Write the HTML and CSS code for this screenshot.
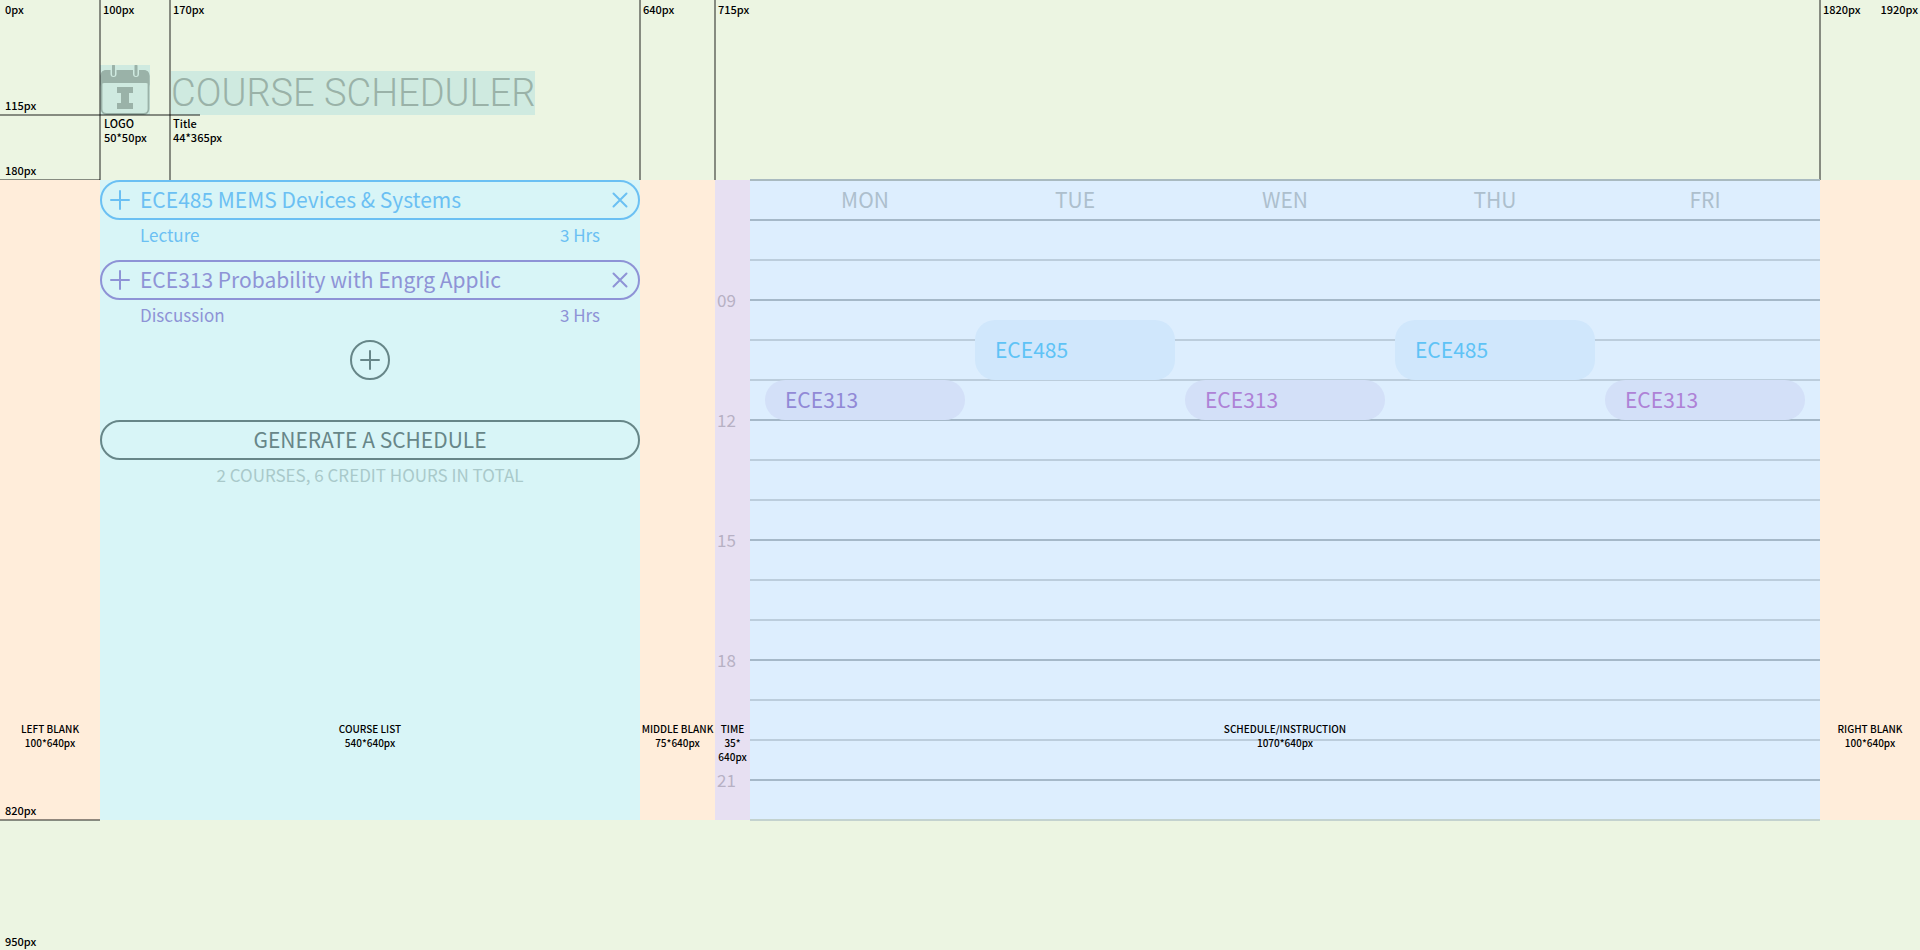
FILE: index.html
```
<!DOCTYPE html>
<html lang="en">
<head>
<meta charset="utf-8">
<title>Course Scheduler</title>
<link rel="stylesheet" href="styles.css">
</head>
<body>
<svg class="sprite" aria-hidden="true">
  <symbol id="plus" viewBox="0 0 20 20"><path d="M10 1v18M1 10h18"/></symbol>
  <symbol id="cross" viewBox="0 0 20 20"><path d="M3.500 3.500l13 13M16.500 3.500l-13 13"/></symbol>
</svg>
<header class="header">
  <div class="brand">
    <svg class="logo" viewBox="0 0 50 50" role="img" aria-label="Course Scheduler logo">
      <rect x="1.500" y="6" width="47" height="43" rx="5" fill="none" stroke="#9ab2a8" stroke-width="1.800"/>
      <path fill="#9ab2a8" d="M.5 22V11q0-6 6-6h37q6 0 6 6v11q0-4-4-4h-41q-4 0-4 4z"/>
      <path fill="#9ab2a8" d="M17 22h16v6h-4v10h4v6H17v-6h4V28h-4z"/>
      <path d="M13.500 0v9M36 0v9" stroke="#cfeae0" stroke-width="6" stroke-linecap="round"/>
      <path d="M13.500 1v8.500M36 1v8.500" stroke="#9ab2a8" stroke-width="3" stroke-linecap="round"/>
    </svg>
    <h1 class="title">COURSE SCHEDULER</h1>
  </div>
  <div class="mark mark-0">0px</div>
  <div class="mark guide guide-100">100px</div>
  <div class="mark guide guide-170">170px</div>
  <div class="mark guide guide-640">640px</div>
  <div class="mark guide guide-715">715px</div>
  <div class="mark guide guide-1820">1820px</div>
  <div class="mark mark-1920">1920px</div>
  <div class="mark level level-115">115px</div>
  <div class="mark level level-180">180px</div>
  <div class="mark note-logo">LOGO<br>50*50px</div>
  <div class="mark note-title">Title<br>44*365px</div>
</header>
<main class="main">
  <div class="blank">
    <div class="note">LEFT BLANK<br>100*640px</div>
    <div class="mark level level-820">820px</div>
  </div>
  <section class="courses" aria-label="Course list">
    <article class="course sky">
      <div class="pill">
        <button class="icon-button" aria-label="Expand ECE485"><svg><use href="#plus"/></svg></button>
        <h2 class="name">ECE485 MEMS Devices &amp; Systems</h2>
        <button class="icon-button" aria-label="Remove ECE485"><svg><use href="#cross"/></svg></button>
      </div>
      <div class="detail"><span>Lecture</span><span>3 Hrs</span></div>
    </article>
    <article class="course violet">
      <div class="pill">
        <button class="icon-button" aria-label="Expand ECE313"><svg><use href="#plus"/></svg></button>
        <h2 class="name">ECE313 Probability with Engrg Applic</h2>
        <button class="icon-button" aria-label="Remove ECE313"><svg><use href="#cross"/></svg></button>
      </div>
      <div class="detail"><span>Discussion</span><span>3 Hrs</span></div>
    </article>
    <button class="add" aria-label="Add a course"><svg><use href="#plus"/></svg></button>
    <button class="generate">GENERATE A SCHEDULE</button>
    <p class="total">2 COURSES, 6 CREDIT HOURS IN TOTAL</p>
    <div class="note">COURSE LIST<br>540*640px</div>
  </section>
  <div class="blank"><div class="note">MIDDLE BLANK<br>75*640px</div></div>
  <div class="times">
    <span>09</span><span>12</span><span>15</span><span>18</span><span>21</span>
    <div class="note">TIME<br>35*<br>640px</div>
  </div>
  <section class="schedule" aria-label="Schedule">
    <hr class="line r0"><hr class="line strong r1"><hr class="line r2"><hr class="line strong r3">
    <hr class="line r4"><hr class="line r5"><hr class="line strong r6"><hr class="line r7">
    <hr class="line r8"><hr class="line strong r9"><hr class="line r10"><hr class="line r11">
    <hr class="line strong r12"><hr class="line r13"><hr class="line r14"><hr class="line strong r15">
    <hr class="line r16">
    <div class="day mon">MON</div><div class="day tue">TUE</div><div class="day wed">WEN</div>
    <div class="day thu">THU</div><div class="day fri">FRI</div>
    <div class="event long tue">ECE485</div>
    <div class="event long thu">ECE485</div>
    <div class="event short mon">ECE313</div>
    <div class="event short orchid wed">ECE313</div>
    <div class="event short orchid fri">ECE313</div>
    <div class="note">SCHEDULE/INSTRUCTION<br>1070*640px</div>
  </section>
  <div class="blank"><div class="note">RIGHT BLANK<br>100*640px</div></div>
</main>
<footer class="footer"><span>950px</span></footer>
</body>
</html>
```
FILE: styles.css
```
* { box-sizing: border-box; }

body {
  margin: 0;
  min-height: 100vh;
  display: flex;
  flex-direction: column;
  background: #ecf5e2;
  color: #000;
  font-family: "Noto Sans CJK SC", "Lato", sans-serif;
  font-size: 11px;
  line-height: 14px;
}

h1, h2, p, hr { margin: 0; font-weight: 400; }
button { padding: 0; border: 0; background: none; color: inherit; font: inherit; cursor: pointer; }
.sprite { position: absolute; width: 0; height: 0; }

/* Header */
.header { position: relative; min-height: 180px; padding: 65px 100px 0; }
.brand { display: flex; align-items: flex-end; gap: 21px; }
.logo { width: 50px; height: 50px; background: #cfeae0; }
.title {
  height: 44px;
  background: #cfeae0;
  color: #9ab2a8;
  font-family: "Roboto", sans-serif;
  font-size: 38px;
  font-weight: 300;
  line-height: 44px;
  white-space: nowrap;
}

/* Measurement marks laid over the page */
.mark { position: absolute; font-weight: 500; white-space: nowrap; }
.mark-0 { top: 2px; left: 5px; }
.mark-1920 { top: 2px; right: 2px; }
.guide { top: 0; height: 180px; padding: 2px; border-left: 2px solid rgba(0, 0, 0, 0.43); }
.guide-100 { left: 99px; }
.guide-170 { left: 169px; }
.guide-640 { left: 639px; }
.guide-715 { left: 714px; }
.guide-1820 { left: calc(100% - 101px); }
.level { left: 0; width: 100px; height: 18px; padding-left: 5px; border-bottom: 2px solid rgba(0, 0, 0, 0.43); }
.level-115 { top: 98px; width: 200px; }
.level-180 { top: 163px; }
.level-820 { bottom: -1px; }
.note-logo { top: 116px; left: 104px; }
.note-title { top: 116px; left: 173px; }

/* Columns */
.main {
  display: grid;
  grid-template-columns: 100px 540px 75px 35px 1fr 100px;
  min-height: 640px;
}
.main > * { position: relative; }
.blank { background: #ffedda; }
.note {
  position: absolute;
  top: 542px;
  left: 0;
  right: 0;
  color: #000;
  font-size: 10px;
  font-weight: 500;
  line-height: 14px;
  text-align: center;
  white-space: nowrap;
}

/* Course list */
.courses { display: flex; flex-direction: column; background: #d8f5f7; color: #678688; }
.course { min-height: 80px; }
.sky { color: #6bc0f3; }
.violet { color: #8e93d6; }
.pill {
  display: flex;
  align-items: center;
  gap: 10px;
  height: 40px;
  padding: 0 8px;
  border: 2px solid;
  border-radius: 20px;
}
.name { flex: 1; padding-bottom: 2px; font-size: 21px; line-height: 34px; white-space: nowrap; }
.icon-button, .icon-button svg { display: block; width: 20px; height: 20px; }
svg { fill: none; stroke: currentColor; stroke-width: 2; stroke-linecap: round; }
.logo { stroke: none; }
.detail { display: flex; justify-content: space-between; padding: 0 40px; font-size: 17px; line-height: 30px; }
.add {
  display: grid;
  place-items: center;
  align-self: center;
  width: 40px;
  height: 40px;
  border: 2px solid;
  border-radius: 50%;
}
.add svg { width: 20px; height: 20px; }
.generate {
  height: 40px;
  margin-top: 40px;
  padding-bottom: 2px;
  border: 2px solid;
  border-radius: 20px;
  font-size: 21px;
  line-height: 34px;
}
.total { color: #a9c9ca; font-size: 17px; line-height: 30px; text-align: center; }

/* Time column */
.times {
  display: flex;
  flex-direction: column;
  gap: 80px;
  padding: 100px 2px 0;
  background: #e7e0f2;
  color: #b7b1c4;
  font-size: 17px;
  line-height: 40px;
}

/* Schedule */
.schedule {
  display: grid;
  grid-template-columns: 10px repeat(5, 1fr) 10px;
  grid-template-rows: repeat(32, 20px);
  background: #ddeefe;
}
.line { grid-column: 1 / -1; align-self: start; width: 100%; height: 2px; margin-top: -1px; border: 0; background: #bccddc; }
.strong { background: #a5b8c8; }
.r0 { grid-row: 1; background: #a9bac0; }
.r1 { grid-row: 3; }
.r2 { grid-row: 5; }
.r3 { grid-row: 7; }
.r4 { grid-row: 9; }
.r5 { grid-row: 11; }
.r6 { grid-row: 13; }
.r7 { grid-row: 15; }
.r8 { grid-row: 17; }
.r9 { grid-row: 19; }
.r10 { grid-row: 21; }
.r11 { grid-row: 23; }
.r12 { grid-row: 25; }
.r13 { grid-row: 27; }
.r14 { grid-row: 29; }
.r15 { grid-row: 31; }
.r16 { grid-row: 32; align-self: end; margin: 0 0 -1px; background: #c3d2cf; }
.mon { grid-column: 2; }
.tue { grid-column: 3; }
.wed { grid-column: 4; }
.thu { grid-column: 5; }
.fri { grid-column: 6; }
.day { grid-row: 1 / span 2; color: #adbfcd; font-size: 21px; line-height: 38px; text-align: center; }
.event { display: flex; align-items: center; margin: 0 5px; padding: 0 20px 2px; border-radius: 20px; font-size: 21px; line-height: 38px; }
.long { grid-row: 8 / span 3; background: #d0e7fc; color: #5fc3f6; }
.short { grid-row: 11 / span 2; background: #d3e0f8; color: #9189d6; }
.orchid { color: #ae82d6; }

.footer { flex: 1; display: flex; align-items: flex-end; min-height: 130px; padding: 2px 5px; font-weight: 500; }
```
